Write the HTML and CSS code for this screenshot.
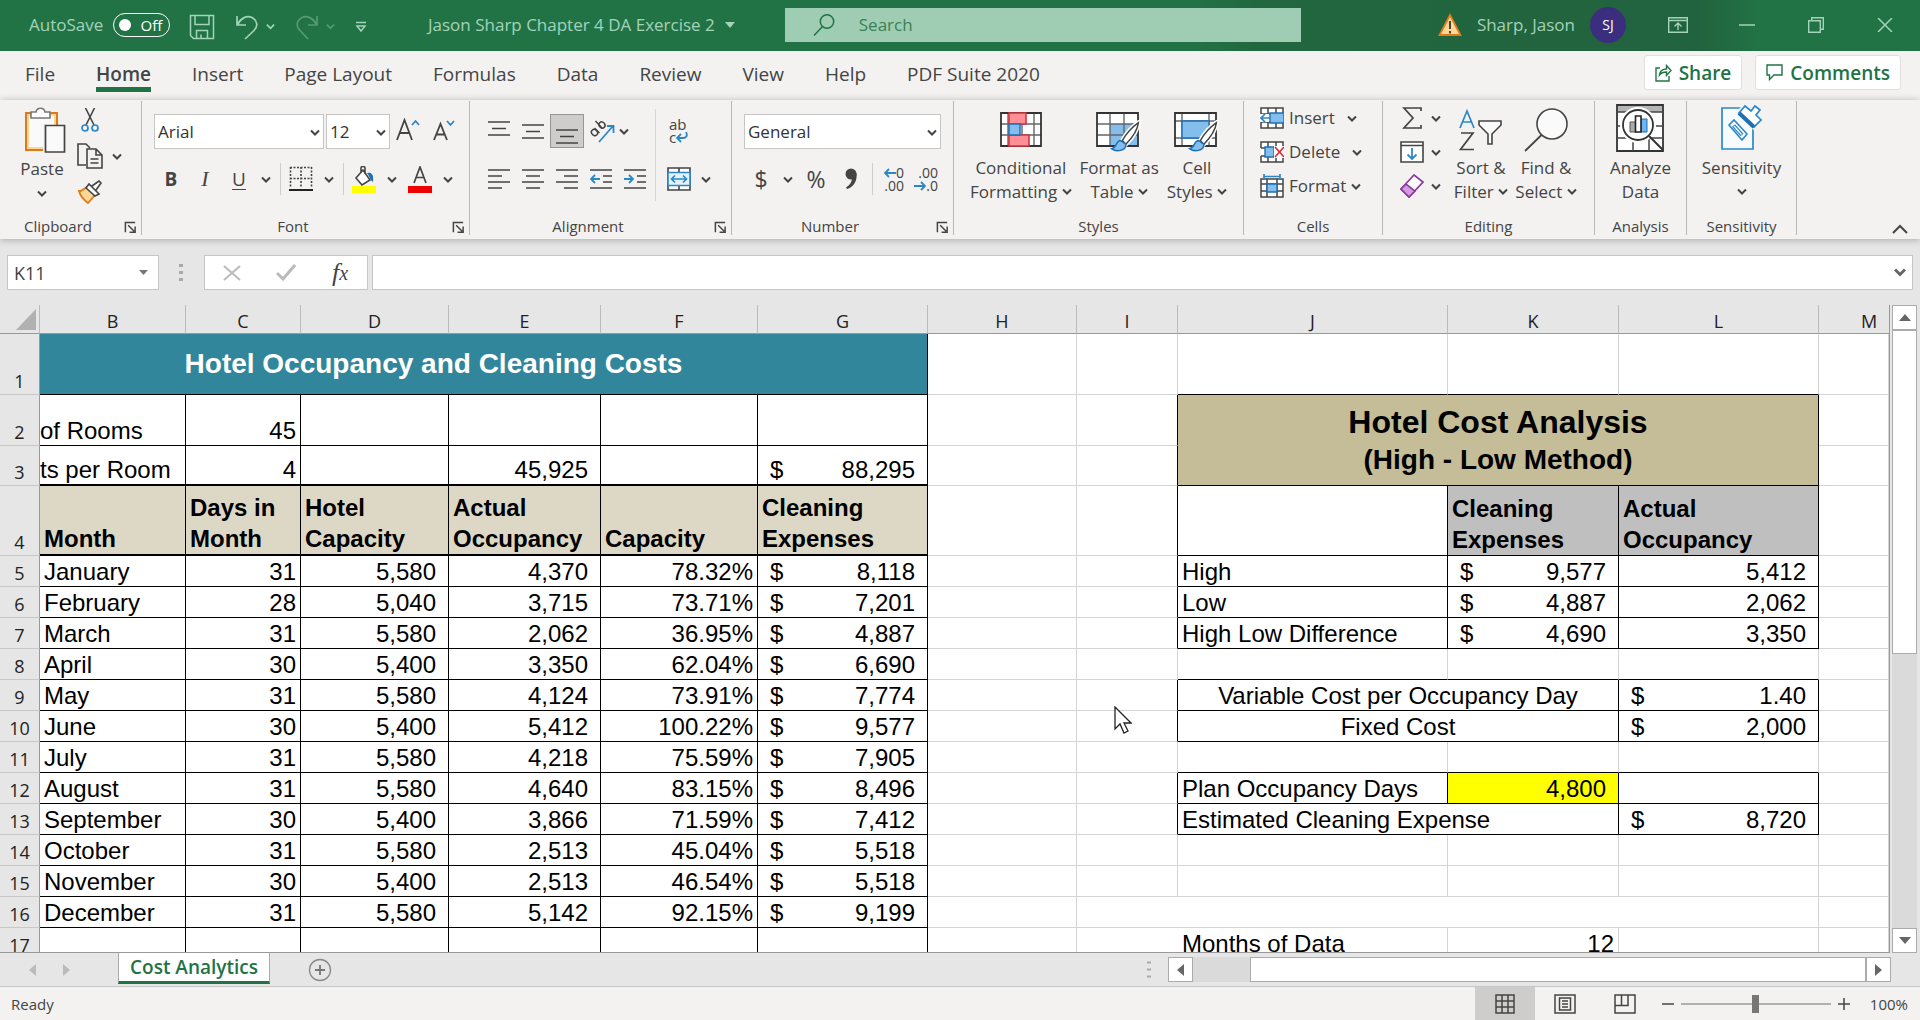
FILE: index.html
```html
<!DOCTYPE html>
<html lang="en">
<head>
<meta charset="utf-8">
<title>Jason Sharp Chapter 4 DA Exercise 2 - Excel</title>
<link rel="stylesheet" href="styles.css">
</head>
<body>
<svg class="defs" width="0" height="0" aria-hidden="true">
  <symbol id="chev" viewBox="0 0 10 7"><path d="M1 1.5 5 5.5 9 1.5" fill="none" stroke="currentColor" stroke-width="2"/></symbol>
  <symbol id="launch" viewBox="0 0 14 14"><path d="M1.5 12V1.5H12M4.500 4.500 11 11M12 6v6H6" fill="none" stroke="currentColor" stroke-width="1.600"/></symbol>
  <symbol id="brush" viewBox="0 0 34 38"><path d="M32 3c-7 5-14 13-18 20l4 4C24 21 31 12 32 3Z" fill="#fff" stroke="#fff" stroke-width="5"/><path d="M32 3c-7 5-14 13-18 20l4 4C24 21 31 12 32 3Z" fill="#fff" stroke="#444" stroke-width="1.600"/><path d="M12 23c-5 0-4 8-10 9 5 4 16 3 16-5z" fill="#83beec" stroke="#1e6fb5" stroke-width="1.600"/></symbol>
</svg>

<header class="titlebar">
  <label class="autosave">AutoSave
    <span class="toggle"><input type="checkbox"><span class="toggle-text">Off</span></span>
  </label>
  <div class="quick">
    <button aria-label="Save"><svg width="26" height="26" viewBox="0 0 26 26"><path d="M1.500 1.500h23v23h-20l-3-3zM6 1.500v9h14v-9M7.500 24.500v-8h11v8M12 24.500v-4" fill="none" stroke="currentColor" stroke-width="1.500"/></svg></button>
    <button class="drop" aria-label="Undo"><svg width="24" height="26" viewBox="0 0 24 26"><path d="M2 2v9h9M2.500 10.500C6 4 12 1 17 3.500c6 3.500 6 9 2 13L10 25" fill="none" stroke="currentColor" stroke-width="1.700"/></svg><svg width="9" height="7"><use href="#chev"/></svg></button>
    <button class="drop faded" aria-label="Redo"><svg width="24" height="26" viewBox="0 0 24 26"><path d="M22 2v9h-9M21.500 10.500C18 4 12 1 7 3.500c-6 3.500-6 9-2 13L13 25" fill="none" stroke="currentColor" stroke-width="1.700"/></svg><svg width="9" height="7"><use href="#chev"/></svg></button>
    <button aria-label="Customize Quick Access Toolbar"><svg width="12" height="12" viewBox="0 0 12 12"><path d="M1 1.500h10M2 5h8l-4 5z" fill="none" stroke="currentColor" stroke-width="1.500"/></svg></button>
  </div>
  <button class="doc-name">Jason Sharp Chapter 4 DA Exercise 2<svg width="10" height="6"><path d="M0 0h10L5 6z" fill="currentColor"/></svg></button>
  <label class="search"><svg width="24" height="24" viewBox="0 0 24 24"><circle cx="15" cy="8.500" r="6.700" fill="none" stroke="currentColor" stroke-width="1.500"/><path d="M10.500 13.500 2 22.500" stroke="currentColor" stroke-width="1.500"/></svg><input type="search" placeholder="Search" aria-label="Search"></label>
  <div class="account">
    <svg width="24" height="24" viewBox="0 0 24 24"><path d="M12 2 22.500 22h-21z" fill="#fdd894" stroke="#e0791c" stroke-width="1.800"/><path d="M12 8v8M12 18v2.500" stroke="#444" stroke-width="2"/></svg>
    <span>Sharp, Jason</span>
    <span class="avatar">SJ</span>
  </div>
  <div class="window-controls">
    <button aria-label="Ribbon display"><svg width="20" height="16" viewBox="0 0 20 16"><path d="M.7.7h18.600v14.600H.7zM.7 3.500h18.600M10 13V6.500M6.500 9.500 10 6l3.500 3.500" fill="none" stroke="currentColor" stroke-width="1.400"/></svg></button>
    <button aria-label="Minimize"><svg width="16" height="4"><path d="M0 2h16" stroke="currentColor" stroke-width="1.500"/></svg></button>
    <button aria-label="Restore"><svg width="16" height="16" viewBox="0 0 16 16"><path d="M.7 3.700h11.600v11.600H.7zM3.700 3.500V.7h11.600v11.600h-3" fill="none" stroke="currentColor" stroke-width="1.400"/></svg></button>
    <button aria-label="Close"><svg width="16" height="14" viewBox="0 0 16 14"><path d="M1 0l14 14M15 0 1 14" stroke="currentColor" stroke-width="1.500"/></svg></button>
  </div>
</header>

<nav class="tabs">
  <a href="#file">File</a><a href="#home" class="active">Home</a><a href="#insert">Insert</a><a href="#layout">Page Layout</a><a href="#formulas">Formulas</a><a href="#data">Data</a><a href="#review">Review</a><a href="#view">View</a><a href="#help">Help</a><a href="#pdf">PDF Suite 2020</a>
  <div class="tab-actions">
    <button><svg width="17" height="18" viewBox="0 0 17 18"><path d="M5 4H1v13h13v-5M4.500 11c.5-4 3-6 7-6V1.500L16 6.500l-4.500 5V8C8 8 6 9 4.500 11Z" fill="none" stroke="currentColor" stroke-width="1.400"/></svg>Share</button>
    <button><svg width="17" height="17" viewBox="0 0 17 17"><path d="M1 1h15v10H8l-4.500 4.500V11H1z" fill="none" stroke="currentColor" stroke-width="1.400"/></svg>Comments</button>
  </div>
</nav>

<section class="ribbon">
  <div class="group g-clipboard">
    <div class="group-body">
      <button class="big paste"><svg width="42" height="46" viewBox="0 0 42 46"><path d="M2 6h31v37H2z" fill="#fdd894" stroke="#e0791c" stroke-width="2"/><path d="M5 9h25v31H5z" fill="#fafafa"/><path d="M7 11V5h5c1-5 8-5 9 0h5v6z" fill="#fff" stroke="#777" stroke-width="1.600"/><path d="M19 17h4v28h-4z" fill="#f3f2f1"/><path d="M21.500 18.500h19V45h-19z" fill="#fafafa" stroke="#444" stroke-width="1.700"/></svg><span>Paste</span><svg class="chev"><use href="#chev"/></svg></button>
      <div class="stack">
        <button aria-label="Cut"><svg width="18" height="24" viewBox="0 0 18 24"><path d="M4.500 0 13 17M13.500 0 5 17" stroke="#444" stroke-width="1.600"/><circle cx="4" cy="20" r="3" fill="none" stroke="#2b88c8" stroke-width="1.700"/><circle cx="14" cy="20" r="3" fill="none" stroke="#2b88c8" stroke-width="1.700"/></svg></button>
        <button class="drop" aria-label="Copy"><svg width="26" height="26" viewBox="0 0 26 26"><path d="M9 22H1V1h8l4 4M10 6h9l6 6v13H10z M19 6v6h6M13.500 16h8M13.500 20h8" fill="none" stroke="#444" stroke-width="1.600"/></svg><svg class="chev"><use href="#chev"/></svg></button>
        <button aria-label="Format Painter"><svg width="24" height="24" viewBox="0 0 24 24"><path d="M3 11 9 7l8 8-7 8C6 20 2 15 1 11z" fill="#fdd894" stroke="#e0791c" stroke-width="1.800"/><path d="m8 8 3-4 10 10-4 2zM14 6l7-5 2 2-5 7" fill="#fff" stroke="#444" stroke-width="1.600"/></svg></button>
      </div>
    </div>
    <footer class="launcher"><span>Clipboard</span><button aria-label="Clipboard settings"><svg width="13" height="13"><use href="#launch"/></svg></button></footer>
  </div>

  <div class="group g-font">
    <div class="group-body rows">
      <div class="row">
        <span class="combo font-name"><select aria-label="Font"><option>Arial</option></select><svg class="chev"><use href="#chev"/></svg></span>
        <span class="combo font-size"><select aria-label="Font size"><option>12</option></select><svg class="chev"><use href="#chev"/></svg></span>
        <button class="w36" aria-label="Increase font size"><svg width="24" height="26" viewBox="0 0 24 26"><path d="M1 22 8.500 2 16 22M4 15h9" fill="none" stroke="#444" stroke-width="1.800"/><path d="M16 7l3.500-4L23 7" fill="none" stroke="#2b88c8" stroke-width="1.800"/></svg></button>
        <button class="w36" aria-label="Decrease font size"><svg width="22" height="26" viewBox="0 0 22 26"><path d="M1 22 7.500 6 14 22M3.500 16.500h8" fill="none" stroke="#444" stroke-width="1.800"/><path d="M14 3l3.500 4L21 3" fill="none" stroke="#2b88c8" stroke-width="1.800"/></svg></button>
      </div>
      <div class="row font-tools">
        <button class="w34 bold">B</button><button class="w34 italic">I</button><button class="w34 under">U</button><button class="w20" aria-label="Underline style"><svg class="chev"><use href="#chev"/></svg></button><i class="sep"></i>
        <button class="w36" aria-label="Borders"><svg width="24" height="26" viewBox="0 0 24 26"><path d="M1 1.500h22M1 12.500h22M1.500 1v21M12 1v21M22.500 1v21" fill="none" stroke="#444" stroke-width="1.600" stroke-dasharray="2 1.500"/><path d="M0 24h24" stroke="#222" stroke-width="2"/></svg></button><button class="w20" aria-label="Border style"><svg class="chev"><use href="#chev"/></svg></button><i class="sep"></i>
        <button class="w36" aria-label="Fill color"><svg width="24" height="27" viewBox="0 0 24 27"><path d="m4 12 7-8 7 10-8 5zM9 7V2c0-2 4-2 4 0v6" fill="#fff" stroke="#444" stroke-width="1.600"/><path d="M15 7c4-1 7 1 6 9-3-2-3-5-6-9z" fill="#1e6fb5"/><path d="M0 20h24v7H0z" fill="#ff0"/></svg></button><button class="w20" aria-label="Fill colors"><svg class="chev"><use href="#chev"/></svg></button>
        <button class="w36" aria-label="Font color"><svg width="24" height="27" viewBox="0 0 24 27"><path d="M6 17 12 1l6 16M8 11.500h8" fill="none" stroke="#444" stroke-width="1.700"/><path d="M0 20h24v7H0z" fill="#e00"/></svg></button><button class="w20" aria-label="Font colors"><svg class="chev"><use href="#chev"/></svg></button>
      </div>
    </div>
    <footer class="launcher"><span>Font</span><button aria-label="Font settings"><svg width="13" height="13"><use href="#launch"/></svg></button></footer>
  </div>

  <div class="group g-align">
    <div class="group-body split">
      <div class="rows">
        <div class="row">
          <button class="w34" aria-label="Top align"><svg width="22" height="26"><path d="M0 4h22M4 10.500h14M0 17h22" stroke="#444" stroke-width="1.700"/></svg></button>
          <button class="w34" aria-label="Middle align"><svg width="22" height="26"><path d="M0 7h22M4 13.500h14M0 20h22" stroke="#444" stroke-width="1.700"/></svg></button>
          <button class="w34 pressed" aria-label="Bottom align"><svg width="22" height="26"><path d="M0 12h22M4 18.500h14M0 25h22" stroke="#444" stroke-width="1.700"/></svg></button>
          <button class="orient" aria-label="Orientation"><svg width="26" height="26" viewBox="0 0 26 26"><g fill="none" stroke="#444" stroke-width="1.500"><ellipse cx="4.500" cy="14.500" rx="2.800" ry="3.300" transform="rotate(-45 4.500 14.500)"/><path d="m4.500 10 5 5"/><ellipse cx="12" cy="7" rx="2.800" ry="3.300" transform="rotate(-45 12 7)"/><path d="m5.500 3 6.500 7"/></g><path d="M9 24 23 8M17 8h6.500v7" fill="none" stroke="#2b88c8" stroke-width="1.800"/></svg><svg class="chev"><use href="#chev"/></svg></button>
        </div>
        <div class="row">
          <button class="w34" aria-label="Align left"><svg width="22" height="22"><path d="M0 2h22M0 8h14M0 14h22M0 20h14" stroke="#444" stroke-width="1.700"/></svg></button>
          <button class="w34" aria-label="Center"><svg width="22" height="22"><path d="M0 2h22M4 8h14M0 14h22M4 20h14" stroke="#444" stroke-width="1.700"/></svg></button>
          <button class="w34" aria-label="Align right"><svg width="22" height="22"><path d="M0 2h22M8 8h14M0 14h22M8 20h14" stroke="#444" stroke-width="1.700"/></svg></button>
          <button class="w34" aria-label="Decrease indent"><svg width="22" height="22"><path d="M0 2h22M13 8h9M13 14h9M0 20h22" stroke="#444" stroke-width="1.700"/><path d="M10 11H1M5 7l-4 4 4 4" fill="none" stroke="#2b88c8" stroke-width="1.800"/></svg></button>
          <button class="w34" aria-label="Increase indent"><svg width="22" height="22"><path d="M0 2h22M13 8h9M13 14h9M0 20h22" stroke="#444" stroke-width="1.700"/><path d="M0 11h9M5 7l4 4-4 4" fill="none" stroke="#2b88c8" stroke-width="1.800"/></svg></button>
        </div>
      </div>
      <div class="rows wrap-merge">
        <div class="row"><button class="w34 wrap" aria-label="Wrap text"><span>ab</span><span>c<svg width="12" height="11" viewBox="0 0 12 11"><path d="M10 0c2 4 0 6-3 6H1M5 2 1 6l4 4" fill="none" stroke="#2b88c8" stroke-width="1.800"/></svg></span></button></div>
        <div class="row"><button class="w34" aria-label="Merge and center"><svg width="24" height="24" viewBox="0 0 24 24"><path d="M1 1h22v22H1zM12 1v5M12 18v5" fill="#fff" stroke="#444" stroke-width="1.600"/><path d="M1 5.500h22v13H1z" fill="#e6f2fb" stroke="#2b88c8" stroke-width="1.600"/><path d="M4 12h16M8 8.500 4.500 12 8 15.500M16 8.500l3.500 3.500-3.500 3.500" fill="none" stroke="#2b88c8" stroke-width="1.700"/></svg></button><button class="w20" aria-label="Merge options"><svg class="chev"><use href="#chev"/></svg></button></div>
      </div>
    </div>
    <footer class="launcher"><span>Alignment</span><button aria-label="Alignment settings"><svg width="13" height="13"><use href="#launch"/></svg></button></footer>
  </div>

  <div class="group g-number">
    <div class="group-body rows">
      <div class="row"><span class="combo num-format"><select aria-label="Number format"><option>General</option></select><svg class="chev"><use href="#chev"/></svg></span></div>
      <div class="row number-tools">
        <button class="w34 glyph">$</button><button class="w20" aria-label="Currency"><svg class="chev"><use href="#chev"/></svg></button><button class="w36 glyph">%</button><button class="w34" aria-label="Comma style"><svg width="12" height="22" viewBox="0 0 12 22"><circle cx="6" cy="6" r="5.500" fill="#444"/><path d="M11.500 5c1 8-3 14-9.500 16l-1-1.500C5 17 7 14 7 10z" fill="#444"/></svg></button><i class="sep"></i>
        <button class="w34 decimal" aria-label="Increase decimal"><span><svg width="12" height="10" viewBox="0 0 12 10"><path d="M12 5H1M5 1 1 5l4 4" fill="none" stroke="#2b88c8" stroke-width="1.800"/></svg>0</span><span>.00</span></button>
        <button class="w34 decimal" aria-label="Decrease decimal"><span>.00</span><span><svg width="12" height="10" viewBox="0 0 12 10"><path d="M0 5h11M7 1l4 4-4 4" fill="none" stroke="#2b88c8" stroke-width="1.800"/></svg>.0</span></button>
      </div>
    </div>
    <footer class="launcher"><span>Number</span><button aria-label="Number settings"><svg width="13" height="13"><use href="#launch"/></svg></button></footer>
  </div>

  <div class="group g-styles">
    <div class="group-body">
      <button class="big"><svg width="42" height="46" viewBox="0 0 42 46"><path d="M1 5h40v33H1z" fill="#fff"/><path d="M1 16h40M1 27h40M8 5v33M34 5v33M22 5v33" stroke="#666" stroke-width="1.400"/><path d="M1 5h40v33H1z" fill="none" stroke="#333" stroke-width="1.800"/><path d="M9 5h17v11H9zM9 27h20v11H9z" fill="#ff8f96" stroke="#d8333c" stroke-width="1.600"/><path d="M9 16h11v11H9z" fill="#83beec" stroke="#1e6fb5" stroke-width="1.500"/></svg><span>Conditional</span><span>Formatting <svg class="chev"><use href="#chev"/></svg></span></button>
      <button class="big"><svg width="46" height="46" viewBox="0 0 46 46"><path d="M1 5h41v33H1z" fill="#fff"/><path d="M14 16h28v22H14z" fill="#83beec"/><path d="M1 16h41M1 27h41M14 5v33M28 5v33" stroke="#666" stroke-width="1.400"/><path d="M1 5h41v33H1z" fill="none" stroke="#333" stroke-width="1.800"/><use href="#brush" x="12" y="12" width="34" height="34"/></svg><span>Format as</span><span>Table <svg class="chev"><use href="#chev"/></svg></span></button>
      <button class="big"><svg width="46" height="46" viewBox="0 0 46 46"><path d="M1 5h41v33H1z" fill="#fff"/><path d="M1 13h41M1 30h41M8 5v33M35 5v33" stroke="#666" stroke-width="1.400"/><path d="M1 5h41v33H1z" fill="none" stroke="#333" stroke-width="1.800"/><path d="M8 13h27v17H8z" fill="#83beec" stroke="#1e6fb5" stroke-width="1.400"/><use href="#brush" x="12" y="12" width="34" height="34"/></svg><span>Cell</span><span>Styles <svg class="chev"><use href="#chev"/></svg></span></button>
    </div>
    <footer><span>Styles</span></footer>
  </div>

  <div class="group g-cells">
    <div class="group-body stack">
      <button class="item"><svg width="24" height="22" viewBox="0 0 24 22"><path d="M1 1h22v20H1zM8 1v20M16 1v20M1 7h22M1 15h22" fill="#fff" stroke="#444" stroke-width="1.500"/><path d="M10 6h14v10H10z" fill="#83beec" stroke="#1e6fb5" stroke-width="1.400"/><path d="M0 7h9v8H0z" fill="#fff"/><path d="M10 11H1M5 7l-4 4 4 4" fill="none" stroke="#2b88c8" stroke-width="1.700"/></svg><span>Insert</span><svg class="chev"><use href="#chev"/></svg></button>
      <button class="item"><svg width="24" height="22" viewBox="0 0 24 22"><path d="M1 7V1h22v20H1v-6M8 1v20M16 1v20M1 7h22M1 15h22" fill="#fff" stroke="#444" stroke-width="1.500"/><path d="M5 6h9v10H5z" fill="#83beec" stroke="#1e6fb5" stroke-width="1.400"/><path d="M14 5h10v12H14z" fill="#fff"/><path d="m15 6 9 10M24 6l-9 10" stroke="#d8333c" stroke-width="1.800"/></svg><span>Delete</span><svg class="chev"><use href="#chev"/></svg></button>
      <button class="item"><svg width="24" height="24" viewBox="0 0 24 24"><path d="M1 5h22v18H1zM7 5v18M17 5v18M1 10h22M1 17h22" fill="#fff" stroke="#444" stroke-width="1.500"/><path d="M7 10h10v8H7z" fill="#83beec" stroke="#1e6fb5" stroke-width="1.400"/><path d="M4 0v5M20 0v5M4 2.500h16" stroke="#2b88c8" stroke-width="1.700"/></svg><span>Format</span><svg class="chev"><use href="#chev"/></svg></button>
    </div>
    <footer><span>Cells</span></footer>
  </div>

  <div class="group g-editing">
    <div class="group-body">
      <div class="stack">
        <button class="drop" aria-label="AutoSum"><svg width="24" height="24" viewBox="0 0 24 24"><path d="M21 5V2H4l9 10-9 10h17v-3" fill="none" stroke="#444" stroke-width="1.700"/></svg><svg class="chev"><use href="#chev"/></svg></button>
        <button class="drop" aria-label="Fill"><svg width="24" height="22" viewBox="0 0 24 22"><path d="M1 1h22v20H1zM1 4.500h22" fill="#fff" stroke="#444" stroke-width="1.600"/><path d="M12 7v11M7.500 13.500 12 18l4.500-4.500" fill="none" stroke="#2b88c8" stroke-width="1.800"/></svg><svg class="chev"><use href="#chev"/></svg></button>
        <button class="drop" aria-label="Clear"><svg width="24" height="24" viewBox="0 0 24 24"><path d="M1 15 14 1l9 7L9 23z" fill="#fff" stroke="#8b3a9c" stroke-width="1.700"/><path d="m1 15 5-5 9 7-6 6z" fill="#d59ae0" stroke="#8b3a9c" stroke-width="1.600"/></svg><svg class="chev"><use href="#chev"/></svg></button>
      </div>
      <button class="big"><svg width="44" height="46" viewBox="0 0 44 46"><path d="M1 20 8 3l7 17M3.500 14h9" fill="none" stroke="#2b88c8" stroke-width="1.700"/><path d="M2 25h12L1.500 41.500H15" fill="none" stroke="#444" stroke-width="1.700"/><path d="M20 13h22v4l-9 9v10h-4V26l-9-9z" fill="#fafafa" stroke="#444" stroke-width="1.600"/></svg><span>Sort &amp;</span><span>Filter <svg class="chev"><use href="#chev"/></svg></span></button>
      <button class="big"><svg width="44" height="46" viewBox="0 0 44 46"><circle cx="28" cy="16" r="15" fill="#fafafa" stroke="#444" stroke-width="1.600"/><path d="M17.500 27 1 43" stroke="#444" stroke-width="1.800"/></svg><span>Find &amp;</span><span>Select <svg class="chev"><use href="#chev"/></svg></span></button>
    </div>
    <footer><span>Editing</span></footer>
  </div>

  <div class="group g-analysis">
    <div class="group-body">
      <button class="big"><svg width="48" height="48" viewBox="0 0 48 48"><path d="M1 1h46v46H1z" fill="#fff" stroke="#333" stroke-width="1.800"/><path d="M2 2h44v6H2z" fill="#b5b5b5"/><path d="M1 8h46M1 22h46M1 34h46M17 34v13M33 34v13" stroke="#444" stroke-width="1.500"/><circle cx="22" cy="21" r="18" fill="#fff"/><circle cx="22" cy="21" r="15" fill="#fff" stroke="#333" stroke-width="1.800"/><path d="m33 32 14 14" stroke="#333" stroke-width="2"/><path d="M14 18h6v10h-6z" fill="#aaa" stroke="#555"/><path d="M25 15h6v13h-6z" fill="#6db5f2" stroke="#1e6fb5"/><path d="M19.500 12h5.500v16h-5.500z" fill="#fff" stroke="#222" stroke-width="1.600"/></svg><span>Analyze</span><span>Data</span></button>
    </div>
    <footer><span>Analysis</span></footer>
  </div>

  <div class="group g-sensitivity">
    <div class="group-body">
      <button class="big"><svg width="42" height="46" viewBox="0 0 42 46"><path d="M1 4h31v41H1z" fill="#f7fbff" stroke="#2b88c8" stroke-width="1.700"/><path d="m8 21 5-5 13 14-5 6z" fill="#fff" stroke="#2b88c8" stroke-width="1.600"/><path d="m12.500 21.500 8.500 9.500" stroke="#2b88c8" stroke-width="4"/><path d="m13 22 7.500 8.500" stroke="#fff" stroke-width="1.200"/><path d="m18 9 6-7 6 5 4-5 5 4-4 5 5 5-7 7z" fill="#fff" stroke="#f3f2f1" stroke-width="5"/><path d="m18 9 6-7 6 5 4-5 5 4-4 5 5 5-7 7z" fill="#fff" stroke="#2b88c8" stroke-width="1.700"/><path d="m18 9 15 14" stroke="#1e6fb5" stroke-width="4"/></svg><span>Sensitivity</span><span><svg class="chev"><use href="#chev"/></svg></span></button>
    </div>
    <footer><span>Sensitivity</span></footer>
  </div>
  <button class="collapse" aria-label="Collapse ribbon"><svg width="16" height="10"><path d="m1 9 7-7 7 7" fill="none" stroke="#444" stroke-width="2"/></svg></button>
</section>

<section class="formula-bar">
  <div class="name-box"><input value="K11" aria-label="Name box"><svg width="9" height="5"><path d="M0 0h9L4.500 5z" fill="#777"/></svg></div>
  <svg class="dots" width="4" height="18"><path d="M0 1.500h4M0 8.500h4M0 15.500h4" stroke="#aaa" stroke-width="3"/></svg>
  <div class="fx">
    <button aria-label="Cancel"><svg width="18" height="16"><path d="m1 1 16 14M17 1 1 15" stroke="#bbb" stroke-width="2"/></svg></button>
    <button aria-label="Enter"><svg width="20" height="17"><path d="m1 9 6 6L19 1" fill="none" stroke="#bbb" stroke-width="3"/></svg></button>
    <button class="fn">f<small>x</small></button>
  </div>
  <div class="formula"><input aria-label="Formula"><svg width="12" height="9"><path d="m1 1.500 5 5 5-5" fill="none" stroke="#666" stroke-width="3"/></svg></div>
</section>

<main class="sheet">
  <div class="viewport">
    <table class="grid">
      <colgroup><col class="c-row"><col class="c-b"><col class="c-c"><col class="c-d"><col class="c-e"><col class="c-f"><col class="c-g"><col class="c-h"><col class="c-i"><col class="c-j"><col class="c-k"><col class="c-l"><col class="c-m"></colgroup>
      <thead><tr><th class="corner"><svg width="20" height="21"><path d="M20 0v21H0z" fill="#b1b1b1"/></svg></th><th>B</th><th>C</th><th>D</th><th>E</th><th>F</th><th>G</th><th>H</th><th>I</th><th>J</th><th>K</th><th>L</th><th class="last">M</th></tr></thead>
      <tbody>
        <tr class="r1"><th>1</th><td colspan="6" class="banner box">Hotel Occupancy and Cleaning Costs</td><td></td><td></td><td class="bb"></td><td class="bb"></td><td class="bb"></td><td></td></tr>
        <tr class="r2 ledger"><th>2</th><td class="spill">of Rooms</td><td class="n">45</td><td></td><td></td><td></td><td></td><td></td><td class="br"></td><td colspan="3" rowspan="2" class="card-title box"><strong>Hotel Cost Analysis</strong>(High - Low Method)</td><td></td></tr>
        <tr class="r3 ledger thick"><th>3</th><td class="spill">ts per Room</td><td class="n">4</td><td></td><td class="na">45,925</td><td></td><td><div class="acct"><span>$</span>88,295</div></td><td></td><td class="br"></td><td></td></tr>
        <tr class="r4 ledger thick heads"><th>4</th><td>Month</td><td>Days in Month</td><td>Hotel Capacity</td><td>Actual Occupancy</td><td>Capacity</td><td>Cleaning Expenses</td><td></td><td class="br"></td><td class="box"></td><td class="box gray">Cleaning Expenses</td><td class="box gray">Actual Occupancy</td><td></td></tr>
        <tr class="ledger"><th>5</th><td>January</td><td class="n">31</td><td class="na">5,580</td><td class="na">4,370</td><td class="n">78.32%</td><td><div class="acct"><span>$</span>8,118</div></td><td></td><td class="br"></td><td class="box">High</td><td class="box"><div class="acct"><span>$</span>9,577</div></td><td class="box na">5,412</td><td></td></tr>
        <tr class="ledger"><th>6</th><td>February</td><td class="n">28</td><td class="na">5,040</td><td class="na">3,715</td><td class="n">73.71%</td><td><div class="acct"><span>$</span>7,201</div></td><td></td><td class="br"></td><td class="box">Low</td><td class="box"><div class="acct"><span>$</span>4,887</div></td><td class="box na">2,062</td><td></td></tr>
        <tr class="ledger"><th>7</th><td>March</td><td class="n">31</td><td class="na">5,580</td><td class="na">2,062</td><td class="n">36.95%</td><td><div class="acct"><span>$</span>4,887</div></td><td></td><td class="br"></td><td class="box">High Low Difference</td><td class="box"><div class="acct"><span>$</span>4,690</div></td><td class="box na">3,350</td><td></td></tr>
        <tr class="ledger"><th>8</th><td>April</td><td class="n">30</td><td class="na">5,400</td><td class="na">3,350</td><td class="n">62.04%</td><td><div class="acct"><span>$</span>6,690</div></td><td></td><td></td><td class="bb"></td><td class="bb"></td><td class="bb"></td><td></td></tr>
        <tr class="ledger"><th>9</th><td>May</td><td class="n">31</td><td class="na">5,580</td><td class="na">4,124</td><td class="n">73.91%</td><td><div class="acct"><span>$</span>7,774</div></td><td></td><td class="br"></td><td colspan="2" class="box mid">Variable Cost per Occupancy Day</td><td class="box"><div class="acct"><span>$</span>1.40</div></td><td></td></tr>
        <tr class="ledger"><th>10</th><td>June</td><td class="n">30</td><td class="na">5,400</td><td class="na">5,412</td><td class="n">100.22%</td><td><div class="acct"><span>$</span>9,577</div></td><td></td><td class="br"></td><td colspan="2" class="box mid">Fixed Cost</td><td class="box"><div class="acct"><span>$</span>2,000</div></td><td></td></tr>
        <tr class="ledger"><th>11</th><td>July</td><td class="n">31</td><td class="na">5,580</td><td class="na">4,218</td><td class="n">75.59%</td><td><div class="acct"><span>$</span>7,905</div></td><td></td><td></td><td class="bb"></td><td class="bb"></td><td class="bb"></td><td></td></tr>
        <tr class="ledger"><th>12</th><td>August</td><td class="n">31</td><td class="na">5,580</td><td class="na">4,640</td><td class="n">83.15%</td><td><div class="acct"><span>$</span>8,496</div></td><td></td><td class="br"></td><td class="box">Plan Occupancy Days</td><td class="box na input">4,800</td><td class="box"></td><td></td></tr>
        <tr class="ledger"><th>13</th><td>September</td><td class="n">30</td><td class="na">5,400</td><td class="na">3,866</td><td class="n">71.59%</td><td><div class="acct"><span>$</span>7,412</div></td><td></td><td class="br"></td><td colspan="2" class="box">Estimated Cleaning Expense</td><td class="box"><div class="acct"><span>$</span>8,720</div></td><td></td></tr>
        <tr class="ledger"><th>14</th><td>October</td><td class="n">31</td><td class="na">5,580</td><td class="na">2,513</td><td class="n">45.04%</td><td><div class="acct"><span>$</span>5,518</div></td><td></td><td></td><td></td><td></td><td></td><td></td></tr>
        <tr class="ledger"><th>15</th><td>November</td><td class="n">30</td><td class="na">5,400</td><td class="na">2,513</td><td class="n">46.54%</td><td><div class="acct"><span>$</span>5,518</div></td><td></td><td></td><td></td><td></td><td></td><td></td></tr>
        <tr class="ledger"><th>16</th><td>December</td><td class="n">31</td><td class="na">5,580</td><td class="na">5,142</td><td class="n">92.15%</td><td><div class="acct"><span>$</span>9,199</div></td><td></td><td colspan="4"></td><td></td></tr>
        <tr class="ledger"><th>17</th><td></td><td></td><td></td><td></td><td></td><td></td><td></td><td class="open"></td><td>Months of Data</td><td class="n">12</td><td></td><td></td></tr>
      </tbody>
    </table>
    <svg class="pointer" width="18" height="28" viewBox="0 0 18 28"><path d="M1 1v22l5-5 4 9 4-2-4-8h7z" fill="#fff" stroke="#222" stroke-width="1.300"/></svg>
  </div>
  <div class="vscroll">
    <button aria-label="Scroll up"><svg width="12" height="7"><path d="M0 7h12L6 0z" fill="#666"/></svg></button>
    <div class="vthumb"></div><div class="vtrack"></div>
    <button aria-label="Scroll down"><svg width="12" height="7"><path d="M0 0h12L6 7z" fill="#666"/></svg></button>
  </div>
</main>

<section class="sheet-tabs">
  <button class="arrow" aria-label="Previous sheet"><svg width="7" height="12"><path d="M7 0v12L0 6z" fill="#bbb"/></svg></button>
  <button class="arrow" aria-label="Next sheet"><svg width="7" height="12"><path d="M0 0v12l7-6z" fill="#bbb"/></svg></button>
  <a class="sheet-tab" href="#cost">Cost Analytics</a>
  <button class="add" aria-label="New sheet"><svg width="24" height="24" viewBox="0 0 24 24"><path d="M12 7v10M7 12h10" stroke="#777" stroke-width="1.800"/><circle cx="12" cy="12" r="10.500" fill="none" stroke="#888" stroke-width="1.300"/></svg></button>
  <svg class="hdots" width="4" height="18"><path d="M0 1.500h4M0 8.500h4M0 15.500h4" stroke="#aaa" stroke-width="2"/></svg>
  <div class="hscroll">
    <button aria-label="Scroll left"><svg width="7" height="12"><path d="M7 0v12L0 6z" fill="#666"/></svg></button>
    <div class="htrack"></div><div class="hthumb"></div>
    <button aria-label="Scroll right"><svg width="7" height="12"><path d="M0 0v12l7-6z" fill="#666"/></svg></button>
  </div>
</section>

<footer class="status">
  <span class="ready">Ready</span>
  <button class="view on" aria-label="Normal view"><svg width="20" height="20"><path d="M1 1h18v18H1zM7 1v18M13 1v18M1 7h18M1 13h18" fill="none" stroke="#444" stroke-width="1.500"/></svg></button>
  <button class="view" aria-label="Page layout view"><svg width="22" height="20"><path d="M1 1h20v18H1zM5.500 4h11v12h-11zM8 7h6M8 10h6M8 13h6" fill="none" stroke="#444" stroke-width="1.500"/></svg></button>
  <button class="view" aria-label="Page break view"><svg width="22" height="20"><path d="M1 1h20v18H1zM1 11.500h13V1M7.500 1v10" fill="none" stroke="#444" stroke-width="1.500"/></svg></button>
  <button class="step" aria-label="Zoom out"><svg width="12" height="12"><path d="M0 6h12" stroke="#444" stroke-width="1.500"/></svg></button>
  <input type="range" min="10" max="190" value="100" aria-label="Zoom">
  <button class="step" aria-label="Zoom in"><svg width="12" height="12"><path d="M0 6h12M6 0v12" stroke="#444" stroke-width="1.500"/></svg></button>
  <span class="percent">100%</span>
</footer>
</body>
</html>
```
FILE: styles.css
```css
* { box-sizing: border-box; }
body {
  margin: 0;
  height: 100vh;
  display: flex;
  flex-direction: column;
  overflow: hidden;
  background: #e6e6e6;
  color: #444;
  font: 17px/24px "Open Sans", "Noto Sans", sans-serif;
}
button, input, select { font: inherit; color: inherit; }
button {
  display: inline-flex;
  align-items: center;
  justify-content: center;
  margin: 0;
  padding: 0;
  border: 0;
  background: none;
  white-space: nowrap;
}
a { color: inherit; text-decoration: none; }
svg { flex: none; }
.defs { position: absolute; }
.chev { width: 10px; height: 7px; }

/* title bar */
.titlebar {
  flex: none;
  height: 51px;
  display: flex;
  align-items: center;
  padding: 0 0 2px 29px;
  background: linear-gradient(90deg, #217346 0 1190px, #21673f 1260px, #21633e 1700px, #217346 1760px);
  color: #a3d3b8;
  white-space: nowrap;
}
.autosave { display: flex; align-items: center; gap: 10px; width: 160px; }
.toggle { position: relative; display: flex; color: #fff; }
.toggle input {
  appearance: none;
  width: 57px;
  height: 24px;
  margin: 0;
  padding: 5px;
  border: 1px solid #fff;
  border-radius: 12px;
}
.toggle input::before { content: ""; display: block; width: 12px; height: 12px; border-radius: 50%; background: #fff; }
.toggle-text { position: absolute; right: 8px; top: 0; font-size: 15px; }
.quick { display: flex; align-items: center; gap: 20px; width: 239px; padding-top: 4px; }
.drop { gap: 7px; }
.faded { opacity: .4; }
.doc-name { gap: 10px; }
.search {
  display: flex;
  align-items: center;
  gap: 23px;
  width: 516px;
  height: 34px;
  margin-left: 50px;
  padding-left: 27px;
  background: #9fcdb3;
  color: #217346;
}
.search input { flex: 1; border: 0; padding: 0; background: none; outline: 0; }
.search input::placeholder { color: #3a8058; opacity: 1; }
.account { display: flex; align-items: center; gap: 15px; margin-left: auto; }
.avatar { width: 36px; height: 36px; border-radius: 50%; background: #3b2e7e; color: #fff; font-size: 14px; line-height: 36px; text-align: center; }
.window-controls { display: flex; padding: 0 1px 0 17px; }
.window-controls button { width: 69px; }

/* tab strip */
.tabs {
  flex: none;
  height: 49px;
  display: flex;
  align-items: flex-start;
  gap: 41px;
  padding: 4px 19px 0 25px;
  background: #f3f2f1;
  font-size: 19px;
  white-space: nowrap;
}
.tabs a { padding-top: 6px; line-height: 26px; }
.tabs .active { font-weight: 600; border-bottom: 5px solid #217346; }
.tab-actions { display: flex; gap: 13px; margin-left: auto; }
.tab-actions button {
  height: 35px;
  padding: 0 10px;
  gap: 7px;
  border: 1px solid #e1dfdd;
  border-radius: 3px;
  background: #fff;
  color: #217346;
  font-weight: 600;
}

/* ribbon */
.ribbon {
  position: relative;
  z-index: 1;
  flex: none;
  height: 139px;
  display: flex;
  background: #f3f2f1;
  box-shadow: 0 1px 7px #aaa;
}
.group { flex: none; display: flex; flex-direction: column; margin: 1px 0 4px; border-right: 1px solid #b9b7b5; }
.group-body { flex: 1; display: flex; }
.group > footer { position: relative; height: 17px; display: flex; justify-content: center; font-size: 15px; line-height: 17px; }
.group > footer button { position: absolute; right: 4px; bottom: 1px; }
.group > .launcher { padding-right: 25px; }
.g-clipboard { width: 142px; }
.g-font { width: 328px; }
.g-align { width: 262px; }
.g-number { width: 222px; }
.g-styles { width: 290px; }
.g-cells { width: 139px; }
.g-editing { width: 212px; }
.g-analysis { width: 92px; }
.g-sensitivity { width: 110px; }

.big { flex-direction: column; justify-content: flex-start; padding-top: 7px; }
.big > svg:first-child { margin-bottom: 2px; height: 46px; }
.big > .chev { margin-top: 9px; }
.big .chev { vertical-align: 3px; }
.paste { width: 76px; padding-left: 8px; padding-top: 6px; }
.paste > svg:first-child { margin: 0 0 4px 5px; }
.stack { display: flex; flex-direction: column; }
.stack button { height: 34px; justify-content: flex-start; }
.g-clipboard .stack { padding: 1px 0 0; }
.g-clipboard .stack button { height: 36px; }
.g-clipboard .drop { gap: 8px; }
.g-clipboard .stack svg:first-child { width: 28px; }

.rows { display: flex; flex-direction: column; gap: 14px; padding-top: 13px; }
.row { display: flex; align-items: center; height: 34px; }
.combo { position: relative; display: flex; height: 35px; }
.combo select {
  appearance: none;
  width: 100%;
  padding: 1px 3px 0;
  border: 1px solid #c8c6c4;
  border-radius: 0;
  background: #fff;
  color: #333;
}
.combo .chev { position: absolute; right: 4px; top: 15px; }
.g-font .group-body { padding-left: 12px; }
.font-name { width: 170px; margin-right: 2px; }
.font-size { width: 64px; }
.w20 { width: 20px; }
.w34 { width: 34px; }
.w36 { width: 36px; }
.orient { width: 54px; gap: 3px; justify-content: flex-start; padding-left: 6px; }
.row button { height: 34px; }
.sep { width: 1px; height: 32px; background: #d0cecc; margin: 0 2px 0 4px; }
.bold { font-weight: 700; font-size: 19px; }
.italic { font-style: italic; font-family: "Liberation Serif", serif; font-size: 22px; }
.under { text-decoration: underline; text-underline-offset: 3px; font-size: 19px; }
.pressed { background: #cfcdcb; outline: 1px solid #979593; outline-offset: -1px; }
.g-align .group-body { padding-left: 12px; }
.wrap-merge { margin-left: 3px; padding-left: 7px; background: linear-gradient(#d8d6d4, #d8d6d4) no-repeat 0 8px / 1px 92px; }
.wrap, .decimal { flex-direction: column; font-size: 15px; line-height: 13px; }
.wrap { align-items: flex-start; padding-left: 7px; }
.wrap > span, .decimal > span { display: flex; align-items: center; }
.decimal { font-size: 14px; align-items: flex-end; padding-right: 5px; }
.g-number .group-body { padding-left: 12px; }
.num-format { width: 197px; }
.glyph { font-size: 23px; }

.g-styles .group-body { justify-content: center; gap: 8px; }
.g-cells .group-body { padding-left: 16px; }
.item { gap: 5px; }
.item .chev { margin-left: 7px; }
.item:last-child .chev { margin-left: 0; }
.g-editing .group-body { gap: 15px; padding-left: 17px; }
.g-editing .big { width: 50px; }
.g-analysis .group-body, .g-sensitivity .group-body { justify-content: center; }
.g-analysis .big, .g-sensitivity .big { padding-top: 3px; }
.g-analysis .big > svg:first-child { height: 48px; margin-bottom: 4px; }
.g-sensitivity .big > svg:first-child { margin-bottom: 6px; }
.collapse { align-self: flex-end; margin: 0 12px 5px auto; }

/* formula bar */
.formula-bar { flex: none; display: flex; align-items: center; height: 66px; padding: 16px 7px 15px; }
.name-box, .fx, .formula { display: flex; align-items: center; height: 35px; border: 1px solid #c6c6c6; background: #fff; }
.name-box { width: 152px; padding-right: 10px; }
.name-box input { flex: 1; min-width: 0; border: 0; padding: 0 0 0 6px; outline: 0; font-size: 18px; }
.dots { margin: 0 21px 0 20px; }
.fx { width: 164px; }
.fx button { flex: 1; }
.fx .fn { font: italic 26px/30px "Liberation Serif", serif; }
.fn small { font-size: 20px; }
.formula { flex: 1; margin-left: 4px; padding-right: 6px; }
.formula input { flex: 1; border: 0; outline: 0; background: none; }

/* worksheet */
.sheet { flex: 1; min-height: 0; display: flex; gap: 2px; padding-right: 3px; }
.viewport { position: relative; flex: 1; min-width: 0; overflow: hidden; border-right: 1px solid #999; border-bottom: 1px solid #999; }
.grid {
  width: 100%;
  table-layout: fixed;
  border-collapse: separate;
  border-spacing: 0;
  background: #fff;
  color: #000;
  font: 24px/28px "Liberation Sans", Arial, sans-serif;
}
.c-row { width: 40px; }
.c-b { width: 146px; }
.c-c { width: 115px; }
.c-d { width: 148px; }
.c-e { width: 152px; }
.c-f { width: 157px; }
.c-g { width: 170px; }
.c-h { width: 149px; }
.c-i { width: 101px; }
.c-j { width: 270px; }
.c-k { width: 171px; }
.c-l { width: 200px; }
.grid th { padding: 0; background: #e6e6e6; color: #222; font: 18px/24px "Open Sans", sans-serif; border-right: 1px solid #999; }
.grid thead th { height: 29px; vertical-align: bottom; border-bottom: 1px solid #999; border-right-color: #bbb; }
.grid thead .corner { text-align: right; padding: 0 3px 3px 0; line-height: 0; }
.grid thead .last { border-right: 0; padding-left: 30px; }
.grid tbody th { height: 31px; vertical-align: bottom; border-bottom: 1px solid #c8c8c8; padding-bottom: 1px; }
.grid td { height: 31px; padding: 0 4px; vertical-align: bottom; border-right: 1px solid #d4d4d4; border-bottom: 1px solid #d4d4d4; overflow: hidden; }
.grid .r1 > * { height: 61px; }
.grid .r2 > * { height: 51px; }
.grid .r3 > * { height: 40px; }
.grid .r4 > * { height: 70px; }
.ledger td:nth-child(-n+7), .grid .box { border-color: #000; }
.thick td:nth-child(-n+7) { border-bottom-width: 2px; }
.grid .br { border-right-color: #000; }
.grid .bb { border-bottom-color: #000; }
.grid .open { border-right-color: transparent; }
.grid .n { text-align: right; }
.grid .na { text-align: right; padding-right: 12px; }
.grid .mid { text-align: center; }
.grid .spill { padding-left: 0; white-space: nowrap; }
.acct { display: flex; justify-content: space-between; padding: 0 8px; }
.heads td { font-weight: 700; line-height: 31px; }
.heads td:nth-child(-n+7) { background: #ddd8c5; }
.grid .gray { background: #bfbfbf; }
.grid .input { background: #ff0; }
.grid .banner { padding-right: 104px; background: #31869b; color: #fff; font-size: 28px; line-height: 30px; font-weight: 700; text-align: center; vertical-align: middle; }
.grid .card-title { padding-top: 2px; background: #c4bd97; font-size: 28px; line-height: 38px; font-weight: 700; text-align: center; vertical-align: middle; }
.card-title strong { display: block; font-size: 32px; }
.pointer { position: absolute; left: 1114px; top: 401px; }

.vscroll { flex: none; display: flex; flex-direction: column; width: 25px; }
.vscroll button { height: 25px; border: 1px solid #ababab; background: #fff; }
.vthumb { flex: 54; border: 1px solid #ababab; background: #fff; }
.vtrack { flex: 46; background: #dadada; }

/* sheet tabs */
.sheet-tabs { flex: none; display: flex; align-items: center; height: 34px; padding-right: 29px; border-bottom: 1px solid #c6c6c6; }
.arrow { width: 34px; }
.arrow:first-child { margin-left: 15px; }
.sheet-tab { align-self: flex-start; height: 32px; margin: -1px 0 0 35px; padding: 0 11px; background: #fff; border: solid #ababab; border-width: 0 1px; border-bottom: 3px solid #217346; color: #217346; font-size: 19px; font-weight: 600; line-height: 31px; }
.add { margin-left: 38px; }
.hdots { margin-left: auto; }
.hscroll { display: flex; width: 723px; height: 25px; margin-left: 17px; }
.hscroll button { width: 25px; border: 1px solid #ababab; background: #fff; }
.htrack { flex: 57; background: #dadada; }
.hthumb { flex: 616; border: 1px solid #ababab; background: #fff; }

/* status bar */
.status { flex: none; display: flex; align-items: center; height: 33px; padding-right: 12px; background: #f3f2f1; font-size: 15px; }
.ready { margin: 0 auto 0 11px; }
.view { width: 60px; height: 33px; }
.view.on { background: #cfcdcb; }
.step { width: 26px; height: 33px; }
.status input { appearance: none; width: 150px; height: 18px; margin: 0; background: linear-gradient(#b0b0b0, #b0b0b0) no-repeat center / 100% 2px; }
.status input::-webkit-slider-thumb { appearance: none; width: 7px; height: 18px; background: #767676; }
.percent { margin-left: 13px; }
```
